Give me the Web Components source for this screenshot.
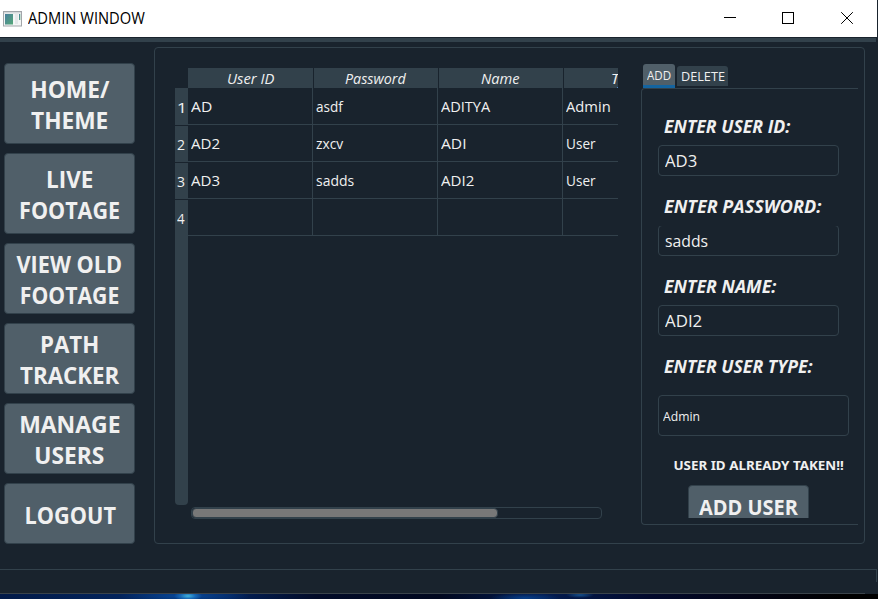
<!DOCTYPE html>
<html lang="en">
<head>
<meta charset="utf-8">
<title>ADMIN WINDOW</title>
<style>
html,body{margin:0;width:878px;height:599px;overflow:hidden;background:#19232d}
body{font-family:"Open Sans","Noto Sans",sans-serif;color:#f0f0f0}
</style>
</head>
<body>
<admin-window></admin-window>
<script>
const pen = document.createElement('canvas').getContext('2d');

// One line of text whose inked width is given by the "w" attribute; "dx" nudges it sideways.
customElements.define('fit-text', class extends HTMLElement {
  connectedCallback() {
    const root = this.attachShadow({mode:'open'});
    root.innerHTML = `<style>
      :host{display:block;flex:none;white-space:nowrap}
      span{display:inline-block;transform-origin:0 50%}
    </style><span><slot></slot></span>`;
    const w = parseFloat(this.getAttribute('w'));
    const dx = parseFloat(this.getAttribute('dx') || 0);
    this.style.width = w + 'px';
    const s = getComputedStyle(this);
    pen.font = `${s.fontStyle} ${s.fontWeight} ${s.fontSize} ${s.fontFamily}`;
    const m = pen.measureText(this.textContent);
    const k = w / (m.actualBoundingBoxLeft + m.actualBoundingBoxRight);
    root.querySelector('span').style.transform = `translateX(${m.actualBoundingBoxLeft * k + dx}px) scaleX(${k})`;
  }
});

customElements.define('title-bar', class extends HTMLElement {
  connectedCallback() {
    this.attachShadow({mode:'open'}).innerHTML = `<style>
      :host{display:flex;box-sizing:border-box;height:37px;width:877px;background:#fff;color:#000;align-items:center;padding-left:3px;font-size:15.5px;line-height:35px}
      svg{display:block;flex:none}
      fit-text{margin:0 0 1px 6px}
      .ctl{margin-left:auto}
    </style>
    <svg width="19" height="16" viewBox="0 0 19 16">
      <defs><linearGradient id="g" x1="0" y1="0" x2="1" y2="1"><stop offset="0" stop-color="#4a7f9e"/><stop offset="1" stop-color="#55a878"/></linearGradient></defs>
      <rect x=".5" y=".5" width="18" height="14.5" fill="#f4f6f6" stroke="#a2a6aa"/>
      <rect x="1" y="1" width="17" height="1.5" fill="#d5d9dc"/>
      <rect x="2" y="3" width="8" height="10.5" fill="url(#g)"/>
      <rect x="12" y="3" width="3" height="10" fill="#e4e8ea"/>
      <rect x="16" y="3" width="1.3" height="6" fill="url(#g)"/>
    </svg>
    <fit-text w="117.5">ADMIN WINDOW</fit-text>
    <svg class="ctl" width="153" height="37" viewBox="0 0 153 37" fill="none" stroke="#000">
      <path d="M0 17.5h12" shape-rendering="crispEdges"/>
      <rect x="58.5" y="12.5" width="11" height="11" shape-rendering="crispEdges"/>
      <path d="M117.2 12.2l11.6 11.6M128.8 12.2l-11.6 11.6"/>
    </svg>`;
  }
});

customElements.define('nav-button', class extends HTMLElement {
  connectedCallback() {
    this.attachShadow({mode:'open'}).innerHTML = `<style>
      :host{display:flex;flex-direction:column;align-items:center;justify-content:center;box-sizing:border-box;
        width:131px;height:71px;padding-top:2px;background:#505f69;border:1px solid #32414b;border-radius:4px;
        font-size:22.5px;font-weight:700;line-height:31px}
      :host([tall]){height:81px;padding-top:3px}
      :host([short]){height:61px;padding-top:3px}
    </style><slot></slot>`;
  }
});

customElements.define('user-table', class extends HTMLElement {
  connectedCallback() {
    const rows = [
      [['AD',20.3],['asdf',27.7],['ADITYA',49.7],['Admin',43.5]],
      [['AD2',28.5],['zxcv',27.7],['ADI',24.3],['User',28.5,1]],
      [['AD3',28.5],['sadds',38],['ADI2',32.7],['User',28.5,1]],
      [null,null,null,null]];
    const heads = [['User ID',46.3,1],['Password',61,-1],['Name',39,-1],['Type',34]];
    const nums = [6,7.5,7.5,8];
    const t = c => c ? `<fit-text w="${c[1]}" dx="${c[2] || 0}">${c[0]}</fit-text>` : '';
    this.attachShadow({mode:'open'}).innerHTML = `<style>
      :host{display:block;width:443px;font-size:15px}
      .top{display:flex;gap:1px;margin-left:13px;width:430px;height:20px;overflow:hidden;font-style:italic;line-height:20px}
      .top div{box-sizing:border-box;flex:none;width:124px;background:#32414b;display:flex;justify-content:center}
      .top div:first-child{width:125px}
      .top div:last-child{padding-left:6px}
      .body{display:flex;height:417px}
      .side{width:13px;display:flex;flex-direction:column;gap:1px;border-radius:0 0 4px 4px;overflow:hidden;flex:none}
      .side div{box-sizing:border-box;height:36px;flex:none;background:#32414b;display:flex;justify-content:center;line-height:36px;padding-right:1.5px}
      .side div:first-child{height:37px;line-height:38px}
      .side div:last-child{flex:1}
      .grid{width:430px;overflow:hidden}
      .row{display:flex;height:37px}
      .cell{box-sizing:border-box;flex:none;width:125px;border:solid #32414b;border-width:0 1px 1px 0;padding-left:3px;line-height:37px}
      .bar{box-sizing:border-box;margin:2px 0 0 16px;width:411px;height:12px;border:1px solid #32414b;border-radius:4px}
      .thumb{box-sizing:border-box;width:306px;height:10px;background:#787878;border:1px solid #32414b;border-radius:4px}
    </style>
    <div class="top">${heads.map(h=>`<div>${t(h)}</div>`).join('')}</div>
    <div class="body">
      <div class="side">${nums.map((w,i)=>`<div><fit-text w="${w}">${i+1}</fit-text></div>`).join('')}</div>
      <div class="grid">${rows.map(r=>`<div class="row">${r.map(c=>`<div class="cell">${t(c)}</div>`).join('')}</div>`).join('')}</div>
    </div>
    <div class="bar"><div class="thumb"></div></div>`;
  }
});

customElements.define('form-field', class extends HTMLElement {
  connectedCallback() {
    const a = n => this.getAttribute(n);
    this.attachShadow({mode:'open'}).innerHTML = `<style>
      :host{display:block;height:80px}
      .label{font-size:17px;font-weight:700;font-style:italic;line-height:41px;height:39px;padding-left:6px}
      .box{box-sizing:border-box;width:181px;height:31px;border:1px solid #32414b;border-radius:4px;padding-left:6px;font-size:17px;line-height:30px}
      :host([clipped]) .box{clip-path:inset(1px 0 0 0)}
      :host([combo]){height:110px}
      :host([combo]) .label{height:49px}
      :host([combo]) .box{width:191px;height:41px;padding-left:4px;font-size:13px;line-height:41px}
    </style>
    <div class="label"><fit-text w="${a('lw')}">${a('label')}</fit-text></div>
    <div class="box"><fit-text w="${a('vw')}">${a('value')}</fit-text></div>`;
  }
});

customElements.define('user-tabs', class extends HTMLElement {
  connectedCallback() {
    this.attachShadow({mode:'open'}).innerHTML = `<style>
      :host{display:block;width:217px}
      .tabs{display:flex;gap:2px;height:24px;padding-left:2px;font-size:13px}
      .tab{box-sizing:border-box;display:flex;justify-content:center}
      .on{width:32px;height:24px;background:#505f69;border-bottom:3px solid #1464a0;line-height:23px;border-radius:3px 3px 0 0}
      .off{width:51px;height:20px;margin-top:2px;padding-left:1px;background:#32414b;line-height:21px;border-radius:3px 3px 0 0}
      .pane{box-sizing:border-box;height:437px;border:solid #32414b;border-width:1px 0 1px 1px;border-radius:4px 0 0 4px;padding:17px 0 0 16px}
      .msg{font:700 12.5px/20px "Noto Sans",sans-serif;padding-left:16px;height:29px}
      .clip{height:33px;overflow:hidden;padding-left:30px}
      .add{box-sizing:border-box;width:121px;height:44px;border:1px solid #32414b;border-radius:4px;background:#505f69;display:flex;justify-content:center;font-size:21px;font-weight:700;line-height:43px}
    </style>
    <div class="tabs"><div class="tab on"><fit-text w="23.7">ADD</fit-text></div><div class="tab off"><fit-text w="42.7">DELETE</fit-text></div></div>
    <div class="pane">
      <form-field label="ENTER USER ID:" lw="126.5" value="AD3" vw="31.5"></form-field>
      <form-field clipped label="ENTER PASSWORD:" lw="157.5" value="sadds" vw="43"></form-field>
      <form-field label="ENTER NAME:" lw="112.5" value="ADI2" vw="36.5"></form-field>
      <form-field combo label="ENTER USER TYPE:" lw="148.7" value="Admin" vw="36"></form-field>
      <div class="msg"><fit-text w="168.7" dx=".5">USER ID ALREADY TAKEN!!</fit-text></div>
      <div class="clip"><div class="add"><fit-text w="99">ADD USER</fit-text></div></div>
    </div>`;
  }
});

customElements.define('admin-window', class extends HTMLElement {
  connectedCallback() {
    this.attachShadow({mode:'open'}).innerHTML = `<style>
      :host{display:flex;flex-direction:column;width:878px;height:599px;overflow:hidden}
      .strip{height:4px;width:876px;margin-top:1px;background:#32414b;flex:none}
      .main{display:flex;height:527px;flex:none;box-sizing:border-box;padding:5px 0 0 4px}
      nav{display:flex;flex-direction:column;gap:9px;padding-top:16px;width:150px;flex:none}
      .frame{box-sizing:border-box;width:711px;height:497px;border:1px solid #32414b;border-radius:4px;display:flex;padding-left:20px;flex:none}
      user-table{margin-top:20px}
      user-tabs{margin:16px 0 0 23px}
      .status{box-sizing:border-box;width:877px;height:13px;border:solid #32414b;border-width:1px 1px 0 0;flex:none}
      .rule{height:1px;width:865px;margin-top:11px;background:#3a434a;flex:none}
      .desk{height:5px;flex:none;background:
        radial-gradient(ellipse 14px 5px at 188px 2px,#43b4dc,#1767b4 55%,transparent),
        radial-gradient(ellipse 65px 7px at 185px 2px,#084a9c,transparent),
        radial-gradient(ellipse 14px 3px at 580px 1px,#15508c,transparent),
        radial-gradient(ellipse 35px 5px at 525px 4px,#073f8a,transparent),
        linear-gradient(90deg,#021a48,#03245c 14%,#03225a 26%,#020b28 36%,#01081f 50%,#031c50 62%,#02092c 74%,#030414 86%,#000 96%)}
    </style>
    <title-bar></title-bar>
    <div class="strip"></div>
    <div class="main">
      <nav>
        <nav-button tall><fit-text w="78" dx="1.2">HOME/</fit-text><fit-text w="76.7">THEME</fit-text></nav-button>
        <nav-button tall><fit-text w="44.7" dx="1">LIVE</fit-text><fit-text w="98.5" dx="1">FOOTAGE</fit-text></nav-button>
        <nav-button><fit-text w="105" dx="-.5">VIEW OLD</fit-text><fit-text w="97" dx=".7">FOOTAGE</fit-text></nav-button>
        <nav-button><fit-text w="56">PATH</fit-text><fit-text w="99.5">TRACKER</fit-text></nav-button>
        <nav-button><fit-text w="98.7" dx="1.2">MANAGE</fit-text><fit-text w="68.5" dx=".3">USERS</fit-text></nav-button>
        <nav-button short><fit-text w="89.5" dx="1.5">LOGOUT</fit-text></nav-button>
      </nav>
      <section class="frame"><user-table></user-table><user-tabs></user-tabs></section>
    </div>
    <div class="status"></div>
    <div class="rule"></div>
    <div class="desk"></div>`;
  }
});
</script>
</body>
</html>
